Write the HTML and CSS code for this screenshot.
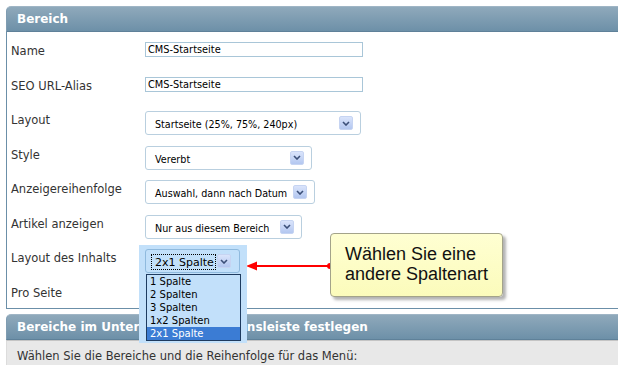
FILE: index.html
```html
<!DOCTYPE html>
<html lang="de">
<head>
    <meta charset="UTF-8">
    <meta name="viewport" content="width=device-width, initial-scale=1.0">
    <title>Bereich bearbeiten</title>
    <link rel="stylesheet" href="styles.css">
</head>
<body>
<div class="page">

    <!-- Bereich -->
    <div class="panel">
        <div class="panel-head">Bereich</div>
        <div class="panel-body">
            <div class="row">
                <span class="label">Name</span>
                <div class="textbox">CMS-Startseite</div>
            </div>
            <div class="row">
                <span class="label">SEO URL-Alias</span>
                <div class="textbox">CMS-Startseite</div>
            </div>
            <div class="row">
                <span class="label">Layout</span>
                <div class="select w-layout">
                    <span class="select-text">Startseite (25%, 75%, 240px)</span>
                    <span class="select-btn"><svg width="8" height="5" viewBox="0 0 8 5"><path d="M1 1 L4 4 L7 1" fill="none" stroke="#3b4f78" stroke-width="1.6"/></svg></span>
                </div>
            </div>
            <div class="row">
                <span class="label">Style</span>
                <div class="select w-style">
                    <span class="select-text">Vererbt</span>
                    <span class="select-btn"><svg width="8" height="5" viewBox="0 0 8 5"><path d="M1 1 L4 4 L7 1" fill="none" stroke="#3b4f78" stroke-width="1.6"/></svg></span>
                </div>
            </div>
            <div class="row">
                <span class="label">Anzeigereihenfolge</span>
                <div class="select w-order">
                    <span class="select-text">Auswahl, dann nach Datum</span>
                    <span class="select-btn"><svg width="8" height="5" viewBox="0 0 8 5"><path d="M1 1 L4 4 L7 1" fill="none" stroke="#3b4f78" stroke-width="1.6"/></svg></span>
                </div>
            </div>
            <div class="row">
                <span class="label">Artikel anzeigen</span>
                <div class="select w-articles">
                    <span class="select-text">Nur aus diesem Bereich</span>
                    <span class="select-btn"><svg width="8" height="5" viewBox="0 0 8 5"><path d="M1 1 L4 4 L7 1" fill="none" stroke="#3b4f78" stroke-width="1.6"/></svg></span>
                </div>
            </div>
            <div class="row">
                <span class="label">Layout des Inhalts</span>
                <div class="combo">
                    <div class="select select-open">
                        <span class="focus-text">2x1 Spalte</span>
                        <span class="select-btn"><svg width="8" height="5" viewBox="0 0 8 5"><path d="M1 1 L4 4 L7 1" fill="none" stroke="#3b4f78" stroke-width="1.6"/></svg></span>
                    </div>
                    <ul class="options">
                        <li>1 Spalte</li>
                        <li>2 Spalten</li>
                        <li>3 Spalten</li>
                        <li>1x2 Spalten</li>
                        <li class="selected">2x1 Spalte</li>
                    </ul>
                </div>
            </div>
            <div class="row">
                <span class="label">Pro Seite</span>
            </div>
        </div>
    </div>

    <!-- Untermenü -->
    <div class="panel panel-menu">
        <div class="panel-head">Bereiche im Untermenü-Navigationsleiste festlegen</div>
        <div class="panel-body panel-grey">
            Wählen Sie die Bereiche und die Reihenfolge für das Menü:
        </div>
    </div>

    <!-- Hinweis -->
    <svg class="pointer" width="90" height="12" viewBox="0 0 90 12">
        <line x1="11" y1="6" x2="86" y2="6" stroke="#ff0000" stroke-width="2"/>
        <polygon points="2,6 13,1.5 13,10.5" fill="#ff0000"/>
        <circle cx="86" cy="6" r="3" fill="#ff0000"/>
    </svg>
    <div class="callout">Wählen Sie eine<br>andere Spaltenart</div>

</div>
</body>
</html>
```

FILE: styles.css
```css
body {
    margin: 0;
    background: #fff;
    font-family: "DejaVu Sans", Verdana, sans-serif;
    overflow: hidden;
}
.page {
    position: relative;
    width: 618px;
    height: 365px;
    overflow: hidden;
}
.panel {
    margin: 6px 0 0 6px;
}
.panel-menu {
    margin-top: 5px;
}
.panel-head {
    height: 26px;
    box-sizing: border-box;
    line-height: 25px;
    padding-left: 10px;
    border-top: 1px solid #9fb5c5;
    border-left: 1px solid #7f9cb1;
    border-bottom: 1px solid #5f8199;
    border-top-left-radius: 5px;
    background: linear-gradient(#8fa9bb, #6d90a8);
    color: #fff;
    font-size: 12px;
    font-weight: bold;
}
.panel-body {
    border-left: 1px solid #6b8fa8;
    border-bottom: 1px solid #6b8fa8;
    padding: 10px 0 0 4px;
    display: flex;
    flex-direction: column;
    gap: 10.5px;
}
.panel-grey {
    display: block;
    height: 24px;
    padding: 8px 0 0 10px;
    border-top: 1px solid #c4c4c4;
    border-left: 1px solid #dcdcdc;
    border-bottom: none;
    background: #e8e8e8;
    color: #333;
    font-size: 11.5px;
    line-height: 14px;
}
.row {
    display: grid;
    grid-template-columns: 134px auto;
    align-items: start;
    min-height: 24px;
}
.label {
    padding-top: 2px;
    font-size: 11.5px;
    line-height: 14px;
    color: #333;
}
.textbox {
    width: 218px;
    height: 15px;
    box-sizing: border-box;
    border: 1px solid #a9c6d8;
    padding: 1px 0 0 2px;
    font-size: 9.8px;
    line-height: 12px;
    color: #000;
}
.select {
    display: flex;
    align-items: center;
    height: 24px;
    box-sizing: border-box;
    border: 1px solid #b9cfdf;
    border-radius: 3px;
    padding: 0 7px 0 9px;
    font-size: 9.6px;
    line-height: 12px;
    color: #000;
    background: #fff;
}
.select-text {
    flex: 1;
    padding-top: 4px;
    white-space: nowrap;
}
.select-btn {
    display: flex;
    align-items: center;
    justify-content: center;
    width: 14px;
    height: 14px;
    box-sizing: border-box;
    border: 1px solid #c6d4f2;
    border-radius: 2px;
    background: linear-gradient(#dae4fb, #b3c7f0);
}
.w-layout { width: 216px; }
.w-style { width: 167px; }
.w-order { width: 170px; }
.w-articles { width: 157px; }

/* aufgeklappte Auswahl */
.combo {
    position: relative;
    width: 95px;
}
.combo::before {
    content: "";
    position: absolute;
    left: -6px;
    top: -4px;
    width: 108px;
    height: 98px;
    background: #c2e0fa;
    z-index: 5;
}
.select-open {
    position: relative;
    z-index: 6;
    width: 95px;
    padding: 0 8px 0 5px;
    border-color: #8fbade;
    background: transparent;
    font-size: 11px;
}
.focus-text {
    width: 66px;
    height: 16px;
    box-sizing: border-box;
    margin-top: 1px;
    margin-right: 1px;
    padding: 1px 0 0 3px;
    border: 1px dotted #000;
    line-height: 13px;
    white-space: nowrap;
}
.options {
    position: absolute;
    z-index: 6;
    left: 1px;
    top: 25px;
    width: 93px;
    margin: 0;
    padding: 0;
    list-style: none;
    border: 1px solid #1e3b5f;
    font-size: 10px;
}
.options li {
    height: 13px;
    line-height: 13px;
    padding-left: 3px;
    color: #000;
}
.options li.selected {
    background: #3b7cd4;
    color: #fff;
}

/* Hinweis */
.pointer {
    position: absolute;
    left: 244px;
    top: 260px;
}
.callout {
    position: absolute;
    left: 330px;
    top: 233px;
    width: 173px;
    height: 64px;
    box-sizing: border-box;
    padding: 10px 0 0 14px;
    border: 1px solid #a3a38a;
    border-radius: 4px;
    background: linear-gradient(#ffffd2, #fbfbbb);
    box-shadow: 3px 3px 3px rgba(0, 0, 0, 0.3);
    font-family: "Liberation Sans", Arial, sans-serif;
    font-size: 18px;
    line-height: 20px;
    color: #111;
}
```
